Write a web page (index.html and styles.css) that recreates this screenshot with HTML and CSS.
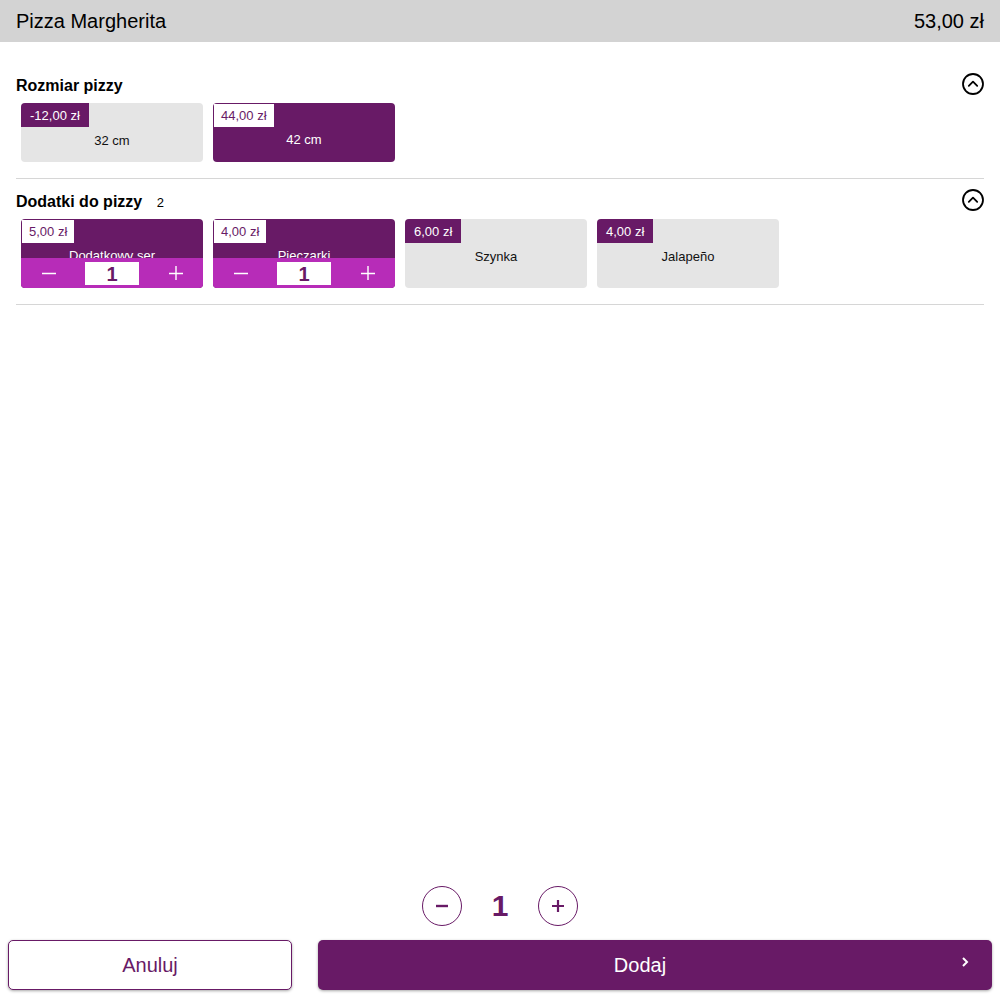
FILE: index.html
```html
<!DOCTYPE html>
<html lang="pl">
<head>
<meta charset="utf-8">
<title>Pizza Margherita</title>
<link rel="stylesheet" href="styles.css">
</head>
<body>
<div class="dialog">
  <header class="dialog-header">
    <span class="product-name">Pizza Margherita</span>
    <span class="product-price">53,00 zł</span>
  </header>

  <main class="dialog-body">
    <section class="group">
      <div class="group-head">
        <h2 class="group-title">Rozmiar pizzy</h2>
        <svg class="collapse-icon" viewBox="0 0 24 24" width="24" height="24"><circle cx="12" cy="12" r="10" fill="none" stroke="#000" stroke-width="1.8"/><path d="M7.8 13.8 12 9.6l4.2 4.2" fill="none" stroke="#000" stroke-width="1.8" stroke-linecap="round" stroke-linejoin="round"/></svg>
      </div>
      <div class="tiles">
        <div class="tile tile-size">
          <span class="badge">-12,00 zł</span>
          <span class="tile-label">32 cm</span>
        </div>
        <div class="tile tile-size is-selected">
          <span class="badge">44,00 zł</span>
          <span class="tile-label">42 cm</span>
        </div>
      </div>
    </section>

    <section class="group">
      <div class="group-head">
        <h2 class="group-title">Dodatki do pizzy <span class="group-count">2</span></h2>
        <svg class="collapse-icon" viewBox="0 0 24 24" width="24" height="24"><circle cx="12" cy="12" r="10" fill="none" stroke="#000" stroke-width="1.8"/><path d="M7.8 13.8 12 9.6l4.2 4.2" fill="none" stroke="#000" stroke-width="1.8" stroke-linecap="round" stroke-linejoin="round"/></svg>
      </div>
      <div class="tiles">
        <div class="tile tile-addon is-selected">
          <span class="badge">5,00 zł</span>
          <span class="tile-label">Dodatkowy ser</span>
          <div class="stepper">
            <svg class="step-btn step-minus" viewBox="0 0 14 14" width="14" height="14"><path d="M0 7.5h14" stroke="#fff" stroke-width="1.4"/></svg>
            <span class="step-value">1</span>
            <svg class="step-btn step-plus" viewBox="0 0 14 14" width="14" height="14"><path d="M0 7.5h14M7 0v14" stroke="#fff" stroke-width="1.4"/></svg>
          </div>
        </div>
        <div class="tile tile-addon is-selected">
          <span class="badge">4,00 zł</span>
          <span class="tile-label">Pieczarki</span>
          <div class="stepper">
            <svg class="step-btn step-minus" viewBox="0 0 14 14" width="14" height="14"><path d="M0 7.5h14" stroke="#fff" stroke-width="1.4"/></svg>
            <span class="step-value">1</span>
            <svg class="step-btn step-plus" viewBox="0 0 14 14" width="14" height="14"><path d="M0 7.5h14M7 0v14" stroke="#fff" stroke-width="1.4"/></svg>
          </div>
        </div>
        <div class="tile tile-addon">
          <span class="badge">6,00 zł</span>
          <span class="tile-label">Szynka</span>
        </div>
        <div class="tile tile-addon">
          <span class="badge">4,00 zł</span>
          <span class="tile-label">Jalapeño</span>
        </div>
      </div>
    </section>
  </main>

  <footer class="dialog-footer">
    <div class="quantity">
      <button class="qty-btn" type="button" aria-label="Mniej">
        <svg viewBox="0 0 40 40" width="40" height="40"><path d="M14 20h12" stroke="#681a66" stroke-width="2.4"/></svg>
      </button>
      <span class="qty-value">1</span>
      <button class="qty-btn" type="button" aria-label="Więcej">
        <svg viewBox="0 0 40 40" width="40" height="40"><path d="M14 20h12M20 14v12" stroke="#681a66" stroke-width="2.2"/></svg>
      </button>
    </div>
    <div class="actions">
      <button class="btn btn-cancel" type="button">Anuluj</button>
      <button class="btn btn-add" type="button">Dodaj
        <svg class="btn-chevron" viewBox="0 0 10 14" width="10" height="14"><path d="M3 3l4 4-4 4" fill="none" stroke="#fff" stroke-width="2"/></svg>
      </button>
    </div>
  </footer>
</div>
</body>
</html>
```

FILE: styles.css
```css
* {
  box-sizing: border-box;
}

html, body {
  margin: 0;
  padding: 0;
  height: 100%;
  background: #fff;
}

body {
  font-family: "Liberation Sans", Arial, sans-serif;
  color: #000;
}

.dialog {
  display: flex;
  flex-direction: column;
  height: 100vh;
}

/* top bar with product name and total */
.dialog-header {
  height: 42px;
  flex: 0 0 42px;
  background: #d3d3d3;
  display: flex;
  align-items: center;
  justify-content: space-between;
  padding: 0 16px;
  font-size: 20px;
  line-height: 1;
}

.dialog-body {
  flex: 1;
  padding: 21px 16px 0;
}

.group {
  padding: 9px 0 16px;
  border-bottom: 1px solid #d6d6d6;
}

.group-head {
  display: flex;
  align-items: center;
  justify-content: space-between;
  height: 24px;
  margin-bottom: 7px;
}

.group-title {
  margin: 4px 0 0;
  font-size: 16px;
  font-weight: bold;
  line-height: 20px;
}

.group-count {
  font-size: 13px;
  font-weight: normal;
  margin-left: 10px;
}

.collapse-icon {
  display: block;
  margin-right: -1px;
}

.tiles {
  display: flex;
  gap: 10px;
  padding-left: 5px;
}

.tile {
  position: relative;
  width: 182px;
  background: #e5e5e5;
  border-radius: 4px;
  overflow: hidden;
  display: flex;
  flex-direction: column;
  align-items: stretch;
  color: #111;
}

.tile-size {
  height: 59px;
}

.tile-addon {
  height: 69px;
}

.badge {
  align-self: flex-start;
  height: 24px;
  line-height: 25px;
  padding: 0 9px;
  font-size: 13px;
  background: #681a66;
  color: #fff;
}

.tile-label {
  margin-top: 6px;
  line-height: 16px;
  font-size: 13px;
  text-align: center;
}

.tile.is-selected {
  background: #681a66;
  color: #fff;
}

.tile.is-selected .badge {
  background: #fff;
  color: #681a66;
  margin: 1px 0 0 1px;
  height: 23px;
  line-height: 24px;
  padding: 0 7px;
}

.tile.is-selected .tile-label {
  margin-top: 5px;
}

/* quantity stepper laid over the bottom of a chosen add-on */
.stepper {
  position: absolute;
  left: 0;
  right: 0;
  bottom: 0;
  height: 30px;
  background: #b72cb8;
  display: grid;
  grid-template-columns: 1fr 1fr 1fr;
  align-items: center;
  justify-items: center;
}

.step-btn {
  display: block;
}

.step-minus {
  margin-right: 4px;
}

.step-plus {
  margin-left: 6px;
}

.step-value {
  width: 54px;
  height: 23px;
  background: #fff;
  color: #681a66;
  font-weight: bold;
  font-size: 20px;
  line-height: 24px;
  text-align: center;
}

.dialog-footer {
  padding: 0 8px 10px;
}

.quantity {
  display: flex;
  justify-content: center;
  align-items: center;
  height: 40px;
  margin-bottom: 14px;
}

.qty-btn {
  width: 40px;
  height: 40px;
  padding: 0;
  border: 1px solid #681a66;
  border-radius: 50%;
  background: #fff;
  display: flex;
  align-items: center;
  justify-content: center;
}

.qty-btn svg {
  display: block;
  margin: -1px;
}

.qty-value {
  width: 76px;
  text-align: center;
  font-size: 30px;
  font-weight: bold;
  color: #681a66;
}

.actions {
  display: flex;
  gap: 26px;
  height: 50px;
}

.btn {
  font-family: inherit;
  font-size: 20px;
  border-radius: 5px;
  box-shadow: 0 1px 3px rgba(0, 0, 0, 0.35);
  cursor: pointer;
}

.btn-cancel {
  flex: 0 0 284px;
  background: #fff;
  color: #681a66;
  border: 1px solid #681a66;
}

.btn-add {
  flex: 1;
  position: relative;
  padding: 0 30px 0 0;
  background: #681a66;
  color: #fff;
  border: none;
}

.btn-chevron {
  position: absolute;
  right: 22px;
  top: 15px;
}
```
